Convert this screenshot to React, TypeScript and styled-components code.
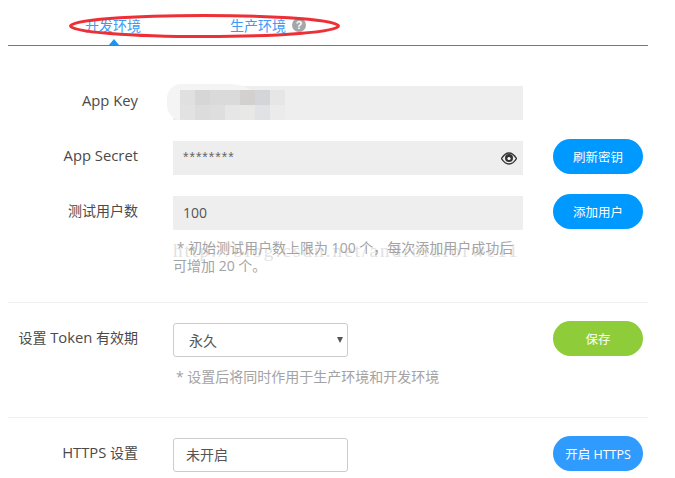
import React from 'react'
import styled, { createGlobalStyle } from 'styled-components'

const BLUR_CELLS = [
  ['#e0e0e0', '#d6d6d6', '#dadada', '#dadada', '#d2d1cf', '#d3d5d9', '#e6e6e6'],
  ['#e2e2e2', '#dcdcdc', '#dedede', '#e6e6e6', '#e8e8e6', '#e0e2e5', '#ebebeb'],
]

const GlobalStyle = createGlobalStyle`
  html, body {
    margin: 0;
    padding: 0;
    background: #fff;
  }
  body {
    font-family: "Open Sans", "Noto Sans CJK SC", sans-serif;
    overflow: hidden;
  }
`

const Page = styled.div`
  position: relative;
  width: 675px;
  height: 478px;
  overflow: hidden;
  padding-left: 8px;
  box-sizing: border-box;
`

const Content = styled.div`
  width: 640px;
`

const Tabs = styled.div`
  display: flex;
  height: 45px;
  padding-left: 77px;
  gap: 89px;
  border-bottom: 1px solid #0099ff;
`

const Tab = styled.div<{ $active?: boolean }>`
  position: relative;
  display: flex;
  align-items: center;
  gap: 6px;
  height: 45px;
  padding-top: 5px;
  box-sizing: border-box;
  color: #3d9bf5;
  font-size: 14px;
  ${({ $active }) =>
    $active &&
    `
    &::after {
      content: '';
      position: absolute;
      left: 24px;
      bottom: 0;
      border-left: 5px solid transparent;
      border-right: 5px solid transparent;
      border-bottom: 6px solid #1a96f0;
    }
  `}
`

const HelpMark = styled.span`
  display: inline-flex;
  align-items: center;
  justify-content: center;
  width: 14px;
  height: 14px;
  border-radius: 50%;
  background: #a6a6a6;
  color: #fff;
  font-size: 11px;
  font-weight: 700;
  font-family: "Liberation Sans", sans-serif;
`

const Section = styled.div<{ $top: number; $bottom: number; $gap?: number; $divided?: boolean }>`
  display: flex;
  flex-direction: column;
  gap: ${({ $gap }) => $gap ?? 0}px;
  padding-top: ${({ $top }) => $top}px;
  padding-bottom: ${({ $bottom }) => $bottom}px;
  border-bottom: ${({ $divided }) => ($divided ? '1px solid #eeeeee' : 'none')};
`

const Row = styled.div`
  display: grid;
  grid-template-columns: 165px 380px 90px;
  align-items: start;
`

const Label = styled.div<{ $top?: number }>`
  box-sizing: border-box;
  padding: ${({ $top }) => $top ?? 4}px 35px 0 0;
  text-align: right;
  font-size: 14px;
  line-height: 20px;
  color: #4a4a4a;
  white-space: nowrap;
`

const Latin = styled.span`
  font-size: 14.8px;
`

const FieldColumn = styled.div`
  display: flex;
  flex-direction: column;
  width: 350px;
`

const GrayField = styled.div`
  position: relative;
  display: flex;
  align-items: center;
  height: 34px;
  padding-left: 10px;
  background: #eeeeee;
  color: #555;
  font-size: 14px;
`

const FieldValue = styled.span`
  position: relative;
  top: -1px;
`

const SecretText = styled.span`
  font-family: "Liberation Sans", sans-serif;
  font-size: 14px;
  letter-spacing: 1px;
  position: relative;
  top: -1px;
  color: #666;
`

const EyeIcon = styled.svg`
  position: absolute;
  right: 6px;
  top: 11px;
`

const BlurPatch = styled.div`
  position: absolute;
  left: -6px;
  top: -2px;
  width: 100px;
  height: 36px;
  background: #f4f4f4;
  border-radius: 24px 60px 0 24px;
`

const BlurGrid = styled.div`
  display: grid;
  margin: 6px 0 0 13px;
  width: 105px;
  grid-template-columns: repeat(7, 15px);
  grid-auto-rows: 15px;
`

const BlurCell = styled.div<{ $color: string }>`
  background: ${({ $color }) => $color};
`

const Hint = styled.div<{ $top: number; $indent?: number }>`
  position: relative;
  margin-top: ${({ $top }) => $top}px;
  font-size: 14px;
  line-height: 18px;
  color: #a3a3a3;
  white-space: nowrap;
  padding-left: ${({ $indent }) => $indent ?? 0}px;
`

const HintText = styled.span`
  position: relative;
`

const Watermark = styled.div`
  position: absolute;
  left: 0;
  top: 1px;
  white-space: nowrap;
  font-family: "Liberation Serif", serif;
  font-size: 19px;
  line-height: 22px;
  letter-spacing: 2.12px;
  color: #e2e2e2;
`

const SelectBox = styled.div`
  position: relative;
  display: flex;
  align-items: center;
  width: 175px;
  height: 34px;
  box-sizing: border-box;
  padding-left: 15px;
  border: 1px solid #cccccc;
  border-radius: 3px;
  background: #fff;
  color: #555;
  font-size: 14px;
  &::after {
    content: '';
    position: absolute;
    right: 4px;
    top: 13px;
    border-left: 3px solid transparent;
    border-right: 3px solid transparent;
    border-top: 6px solid #555;
  }
`

const TextBox = styled.div`
  display: flex;
  align-items: center;
  width: 175px;
  height: 34px;
  box-sizing: border-box;
  padding: 0 0 2px 12px;
  border: 1px solid #cccccc;
  border-radius: 3px;
  color: #555;
  font-size: 14px;
`

const PillButton = styled.div<{ $color: string }>`
  display: flex;
  align-items: center;
  justify-content: center;
  width: 90px;
  height: 35px;
  margin-top: -2px;
  border-radius: 18px;
  background: ${({ $color }) => $color};
  color: #fff;
  font-size: 12.5px;
  white-space: nowrap;
`

const Annotation = styled.svg`
  position: absolute;
  left: 0;
  top: 0;
  pointer-events: none;
`

export default function App() {
  return (
    <Page>
      <GlobalStyle />
      <Content>
        <Tabs>
          <Tab $active>开发环境</Tab>
          <Tab>
            生产环境
            <HelpMark>?</HelpMark>
          </Tab>
        </Tabs>

        <Section $top={40} $bottom={27} $gap={21} $divided>
          <Row>
            <Label><Latin>App Key</Latin></Label>
            <FieldColumn>
              <GrayField>
                <BlurPatch>
                  <BlurGrid>
                    {BLUR_CELLS.flat().map((color, i) => (
                      <BlurCell key={i} $color={color} />
                    ))}
                  </BlurGrid>
                </BlurPatch>
              </GrayField>
            </FieldColumn>
          </Row>
          <Row>
            <Label><Latin>App Secret</Latin></Label>
            <FieldColumn>
              <GrayField>
                <SecretText>********</SecretText>
                <EyeIcon width="16" height="13" viewBox="0 0 16 13">
                  <path
                    d="M0.5 6.5C3 2.5 5.5 1 8 1s5 1.5 7.5 5.5C13 10.5 10.5 12 8 12S3 10.5 0.5 6.5z"
                    fill="none"
                    stroke="#333"
                    strokeWidth="1.4"
                  />
                  <circle cx="8" cy="6" r="4" fill="#333" />
                  <circle cx="8" cy="6.5" r="1.6" fill="#fff" />
                </EyeIcon>
              </GrayField>
            </FieldColumn>
            <PillButton $color="#0099ff">刷新密钥</PillButton>
          </Row>
          <Row>
            <Label $top={5}>测试用户数</Label>
            <FieldColumn>
              <GrayField>
                <FieldValue>100</FieldValue>
              </GrayField>
              <Hint $top={9}>
                <Watermark>http://blog.csdn.net/androidforwe11</Watermark>
                <HintText>
                  &nbsp;* 初始测试用户数上限为 100 个，每次添加用户成功后
                  <br />
                  可增加 20 个。
                </HintText>
              </Hint>
            </FieldColumn>
            <PillButton $color="#0099ff">添加用户</PillButton>
          </Row>
        </Section>

        <Section $top={20} $bottom={31} $divided>
          <Row>
            <Label>设置 <Latin>Token</Latin> 有效期</Label>
            <FieldColumn>
              <SelectBox>永久</SelectBox>
              <Hint $top={11} $indent={3}>* 设置后将同时作用于生产环境和开发环境</Hint>
            </FieldColumn>
            <PillButton $color="#8fcc3a">保存</PillButton>
          </Row>
        </Section>

        <Section $top={20} $bottom={0}>
          <Row>
            <Label><Latin>HTTPS</Latin> 设置</Label>
            <FieldColumn>
              <TextBox>未开启</TextBox>
            </FieldColumn>
            <PillButton $color="#2f9bff">开启 HTTPS</PillButton>
          </Row>
        </Section>
      </Content>

      <Annotation width="675" height="60" viewBox="0 0 675 60">
        <ellipse cx="204.5" cy="26" rx="134" ry="10.5" fill="none" stroke="#ee2f36" strokeWidth="3" />
      </Annotation>
    </Page>
  )
}
